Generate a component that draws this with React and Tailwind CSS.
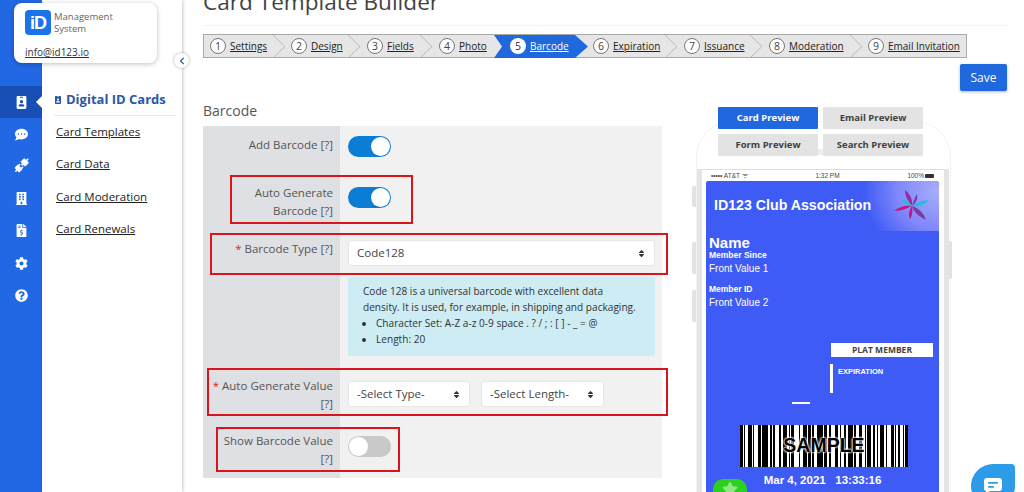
import React from "react";
import { FaIdBadge, FaCommentDots, FaBuilding, FaFileInvoiceDollar, FaCog, FaQuestionCircle, FaChevronLeft, FaSort, FaStar } from "react-icons/fa";

const steps = [
  { n: 1, t: "Settings", w: "w-[82px]", pl: "pl-[6px]" },
  { n: 2, t: "Design", w: "w-[75px]", pl: "pl-[5px]" },
  { n: 3, t: "Fields", w: "w-[72px]", pl: "pl-[6px]" },
  { n: 4, t: "Photo", w: "w-[61px]", pl: "pl-[6px]" },
  { n: 5, t: "Barcode", w: "w-[94px]", pl: "pl-[16px]", active: true },
  { n: 6, t: "Expiration", w: "w-[90px]", pl: "pl-[5px]" },
  { n: 7, t: "Issuance", w: "w-[85px]", pl: "pl-[6px]" },
  { n: 8, t: "Moderation", w: "w-[100px]", pl: "pl-[6px]" },
  { n: 9, t: "Email Invitation", w: "w-[105px]", pl: "pl-[5px]", last: true },
];

function PlugIcon({ className }) {
  return (
    <svg className={className} width="16" height="16" viewBox="0 0 16 16" fill="#fff">
      <g transform="rotate(45 8 8)">
        <rect x="4.6" y="0" width="6.8" height="5.6" rx="1" />
        <rect x="7" y="5.6" width="2" height="1.4" />
        <rect x="5.2" y="7.2" width="1.5" height="2" />
        <rect x="9.3" y="7.2" width="1.5" height="2" />
        <rect x="4.6" y="9" width="6.8" height="5" rx="1" />
        <rect x="7.2" y="14" width="1.6" height="2" />
        <rect x="7.2" y="-2" width="1.6" height="2" />
      </g>
    </svg>
  );
}

const navIcons = [FaIdBadge, FaCommentDots, PlugIcon, FaBuilding, FaFileInvoiceDollar, FaCog, FaQuestionCircle];
const bars = [2,1,1,2,3,1,1,3,2,1,4,2,1,1,2,3,1,2,3,1,1,1,2,4,1,2,3,1,2,1,1,3,4,1,2,2,1,3,3,1,1,2,2,1,4,1,1,3,2,2,1,1,3,1,2,1,1,2,3,1,1,3,2,1,1,1,2,2,1,1,2];

function Step({ s }) {
  return (
    <div className={`relative h-full flex items-center shrink-0 ${s.w} ${s.pl}`}>
      {s.active && (
        <svg className="absolute left-0 top-0" width="94" height="23" viewBox="0 0 94 23">
          <polygon points="0,0 81,0 94,11.5 81,23 0,23 8,11.5" fill="#1f68de" />
        </svg>
      )}
      {!s.active && !s.last && s.n !== 4 && (
        <svg className="absolute right-0 top-0" width="14" height="23" viewBox="0 0 14 23">
          <polyline points="1,0 13,11.5 1,23" fill="none" stroke="#b9b9b9" strokeWidth="1" />
        </svg>
      )}
      <span className={`relative w-[16px] h-[16px] rounded-full flex items-center justify-center text-[10.5px] leading-none shrink-0 ${s.active ? "bg-white text-[#333] " : "bg-white border border-[#777] text-[#444]"}`}>{s.n}</span>
      <a className={`relative ml-[4px] text-[10px] underline whitespace-nowrap ${s.active ? "text-white" : "text-[#222]"}`}>{s.t}</a>
    </div>
  );
}

function Toggle({ on }) {
  return (
    <div className={`w-[43px] h-[21px] rounded-full flex items-center px-[1px] ${on ? "bg-[#0b7dd5] justify-end" : "bg-[#c9c9c9] justify-start"}`}>
      <div className="w-[19px] h-[19px] rounded-full bg-white" />
    </div>
  );
}

function Select({ label, w }) {
  return (
    <div className={`${w} h-[26px] bg-white rounded-[3px] border border-[#e6e6e6] flex items-center justify-between pl-[8px] pr-[8px] text-[11.5px] text-[#444]`}>
      <span>{label}</span>
      <FaSort className="text-[#333] text-[9px]" />
    </div>
  );
}

function Row({ h, pl, pc, children, label, req }) {
  return (
    <div className={`flex ${h}`}>
      <div className={`w-[137px] bg-[#dfe0e4] text-right pr-[7px] text-[11.5px] leading-[18px] text-[#555] ${pl}`}>
        {req && <span className="text-[#e02020]">* </span>}{label}
      </div>
      <div className={`flex-1 bg-[#f1f1f1] pl-[8px] pr-[7px] ${pc}`}>{children}</div>
    </div>
  );
}

function RedBox({ className }) {
  return <div className={`absolute border-2 border-[#d9151b] pointer-events-none ${className}`} />;
}

function Preview({ children, active }) {
  return (
    <div className={`w-[100px] h-[22px] flex items-center justify-center text-[9.5px] font-bold rounded-[1px] ${active ? "bg-[#1f68de] text-white" : "bg-[#e3e3e3] text-[#3f3f3f]"}`}>{children}</div>
  );
}

export default function App() {
  return (
    <div className="relative flex w-[1024px] h-[492px] overflow-hidden bg-white font-['Open_Sans',sans-serif] text-[#333]">
      {/* icon rail */}
      <div className="w-[42px] shrink-0 bg-[#2267e3] pt-[86px] flex flex-col">
        {navIcons.map((I, i) => (
          <div key={i} className={`relative h-[32.2px] flex items-center justify-center text-white shrink-0 ${i === 0 ? "bg-[#174fb5]" : ""}`}>
            <I className="text-[13px]" />
            {i === 0 && <div className="absolute right-0 top-[10px] w-0 h-0 border-y-[6px] border-y-transparent border-r-[6px] border-r-white" />}
          </div>
        ))}
      </div>

      {/* second panel */}
      <div className="w-[140px] shrink-0 bg-white shadow-[1px_0_3px_rgba(0,0,0,0.22)] pt-[91px] pl-[12px] pr-[6px]">
        <div className="flex items-center h-[18px] text-[#2958a8] font-bold text-[13px] whitespace-nowrap">
          <FaIdBadge className="text-[8px] mr-[4px]" />
          <span>Digital ID Cards</span>
        </div>
        <div className="mt-[6px] border-t border-[#e8e8e8]" />
        <div className="flex flex-col pl-[2px] text-[11.5px] text-[#222] underline leading-[32.4px]">
          <a>Card Templates</a>
          <a>Card Data</a>
          <a>Card Moderation</a>
          <a>Card Renewals</a>
        </div>
      </div>

      {/* logo card */}
      <div className="absolute left-[14px] top-[3px] w-[143px] h-[60px] bg-white rounded-[8px] shadow-[0_1px_5px_rgba(0,0,0,0.25)] pl-[11px] pt-[7px]">
        <div className="flex items-start">
          <div className="w-[26px] h-[25px] rounded-[4px] bg-[#1a73e8] text-white flex items-center justify-center font-bold text-[18px] leading-none tracking-[-1px] font-['Liberation_Sans',sans-serif]">iD</div>
          <div className="ml-[3px] text-[9.5px] leading-[12px] text-[#666] pt-[1px]">Management<br />System</div>
        </div>
        <a className="block mt-[10px] text-[10px] leading-[14px] underline text-[#333]">info@id123.io</a>
      </div>

      {/* collapse */}
      <div className="absolute left-[174px] top-[53px] w-[15px] h-[15px] rounded-full bg-white shadow-[0_0_3px_rgba(0,0,0,0.35)] flex items-center justify-center text-[#2958a8]">
        <FaChevronLeft className="text-[8px]" />
      </div>

      {/* main */}
      <div className="flex-1 pl-[21px] pr-[17px] min-w-0">
        <div className="h-[26px] border-b border-[#f3f3f3] relative overflow-hidden">
          <h1 className="absolute left-0 -top-[13px] text-[22.6px] leading-[30px] text-[#444] whitespace-nowrap">Card Template Builder</h1>
        </div>
        <div className="mt-[8px] w-[764px] h-[24px] bg-[#e6e6e6] border-[0.5px] border-[#a9a9a9] flex items-center">
          {steps.map((s) => <Step key={s.n} s={s} />)}
        </div>
        <div className="mt-[6px] flex justify-end">
          <button className="w-[47px] h-[27px] bg-[#1f68de] text-white text-[12px] rounded-[2px] shadow-[0_1px_3px_rgba(0,0,0,0.3)]">Save</button>
        </div>

        <div className="flex mt-[11px]">
          {/* form */}
          <div className="w-[459px] shrink-0">
            <div className="text-[14px] leading-[18px] text-[#555] h-[24px]">Barcode</div>
            <div>
              <Row h="h-[49px]" pl="pt-[10px]" pc="pt-[10px]" label="Add Barcode [?]"><Toggle on /></Row>
              <Row h="h-[58px]" pl="pt-[9px] pl-[20px]" pc="pt-[12px]" label="Auto Generate Barcode [?]"><Toggle on /></Row>
              <Row h="h-[135px]" pl="pt-[7px]" pc="pt-[7px]" label="Barcode Type [?]" req>
                <Select label="Code128" w="w-[307px]" />
                <div className="mt-[11px] h-[79px] w-[307px] bg-[#cdecf4] rounded-[3px] pt-[6px] pl-[15px] text-[10.1px] leading-[16px] text-[#333]">
                  <div>Code 128 is a universal barcode with excellent data</div>
                  <div className="whitespace-nowrap">density. It is used, for example, in shipping and packaging.</div>
                  <ul className="list-disc pl-[13px]">
                    <li>Character Set: A-Z a-z 0-9 space . ? / ; : [ ] - _ = @</li>
                    <li>Length: 20</li>
                  </ul>
                </div>
              </Row>
              <Row h="h-[59px]" pl="pt-[9px] pl-[4px]" pc="pt-[13px] flex gap-[11px]" label="Auto Generate Value [?]" req>
                <Select label="-Select Type-" w="w-[122px]" />
                <Select label="-Select Length-" w="w-[123px]" />
              </Row>
              <Row h="h-[51px]" pl="pt-[5px] pl-[15px]" pc="pt-[9px]" label="Show Barcode Value [?]"><Toggle /></Row>
            </div>
          </div>

          {/* phone */}
          <div className="relative ml-[34px] mt-[19px] w-[255px] h-[500px] shrink-0 border border-[#f2f2f2] rounded-t-[36px] pt-[47px]">
            <div className="absolute -left-[5px] top-[64px] w-[4px] h-[21px] bg-[#e2e2e2] rounded-l-[2px]" />
            <div className="absolute -left-[5px] top-[120px] w-[4px] h-[32px] bg-[#e2e2e2] rounded-l-[2px]" />
            <div className="absolute -left-[5px] top-[168px] w-[4px] h-[32px] bg-[#e2e2e2] rounded-l-[2px]" />
            <div className="absolute -right-[2px] top-[119px] w-[3px] h-[38px] bg-[#e2e2e2] rounded-r-[2px]" />
            <div className="border-x-[5px] border-l-[#e4e4e4] border-r-[#e4e4e4] mr-[1px] ">
              <div className="border-t border-[#ddd] pl-[4px] pr-[5px]">
                <div className="h-[11px] flex items-center justify-between px-[5px] text-[6.5px] text-[#444] font-['Liberation_Sans',sans-serif]">
                  <span>••••• AT&amp;T ᯤ</span>
                  <span>1:32 PM</span>
                  <span className="flex items-center">100%<span className="ml-[1px] inline-block w-[9px] h-[4px] bg-[#333] rounded-[1px]" /></span>
                </div>
                <div className="relative h-[320px] bg-[#3f5bf6] rounded-t-[3px] text-white font-['Liberation_Sans',sans-serif]">
                  <div className="h-[50px] flex items-center justify-between pl-[8px] pr-[8px] rounded-t-[3px] bg-[radial-gradient(ellipse_75px_70px_at_100%_20%,#a9aefc_0%,#8088fb_55%,#3f5bf6_100%)]">
                    <span className="font-bold text-[14.2px] whitespace-nowrap">ID123 Club Association</span>
                    <svg width="38" height="34" viewBox="0 0 38 34">
                      <path d="M19 17 C14 11 12 6 12 1 C17 5 20 11 19 17Z" fill="#9b2a9a" />
                      <path d="M19 17 C21 11 22 8 24 5 C25 10 23 14 19 17Z" fill="#7b3bb0" />
                      <path d="M19 17 C25 13 31 11 36 11 C32 16 25 18 19 17Z" fill="#20c0d8" />
                      <path d="M19 17 C26 19 31 25 33 31 C27 28 21 24 19 17Z" fill="#7d3a98" />
                      <path d="M19 17 C20 23 19 27 17 30 C15 26 16 21 19 17Z" fill="#c3187f" />
                      <path d="M19 17 C13 20 7 22 1 22 C6 18 12 16 19 17Z" fill="#c3187f" />
                      <path d="M19 17 C14 16 10 13 7 10 C12 10 16 13 19 17Z" fill="#20c0d8" />
                    </svg>
                  </div>
                  <div className="pl-[3px]">
                    <div className="pt-[3px] text-[15px] font-bold leading-[17px]">Name</div>
                    <div className="text-[8.5px] font-bold leading-[9px]">Member Since</div>
                    <div className="text-[10px] leading-[14px] mt-[2px]">Front Value 1</div>
                    <div className="text-[8.5px] font-bold leading-[9px] mt-[9px]">Member ID</div>
                    <div className="text-[10px] leading-[14px] mt-[2px]">Front Value 2</div>
                  </div>
                  <div className="ml-[125px] w-[102px] h-[14px] bg-white text-[#444] font-['Open_Sans',sans-serif] font-bold text-[8.5px] flex items-center justify-center mt-[33px]">PLAT MEMBER</div>
                  <div className="ml-[124px] mt-[7px] h-[29px] border-l-[3px] border-white pl-[5px] text-[7.5px] font-bold leading-[10px] pt-[3px]">EXPIRATION</div>
                  <div className="ml-[86px] mt-[9px] w-[18px] h-[2px] bg-white" />
                  <div className="relative ml-[34px] mt-[21px] w-[168px] h-[42px] bg-white overflow-hidden flex">
                    {bars.map((b, i) => (
                      <div key={i} className={`h-full ${i % 2 === 0 ? "bg-black" : "bg-white"}`} style={{ flexGrow: b, flexBasis: 0 }} />
                    ))}
                    <div className="absolute inset-0 flex items-center justify-center text-[19.5px] text-black font-bold [text-shadow:0_0_2px_#fff,0_0_2px_#fff,0_0_3px_#fff]">SAMPLE</div>
                  </div>
                  <div className="mt-[6px] text-center text-[11.5px] font-bold leading-[14px] whitespace-pre">Mar 4, 2021   13:33:16</div>
                  <div className="absolute left-[7px] top-[298px] w-[34px] h-[30px] rounded-[10px] bg-[#2cd11f] flex items-start justify-center pt-[2px]">
                    <FaStar className="text-[#8fe77f] text-[16px]" />
                  </div>
                </div>
              </div>
            </div>
            {/* notch */}
            <div className="absolute left-[95px] top-[27px] w-[34px] h-[6px] rounded-full bg-[#ededed]" />
            {/* tabs */}
            <div className="absolute left-[21px] -top-[15px] grid grid-cols-[100px_100px] gap-x-[5px] gap-y-[5px]">
              <Preview active>Card Preview</Preview>
              <Preview>Email Preview</Preview>
              <Preview>Form Preview</Preview>
              <Preview>Search Preview</Preview>
            </div>
          </div>
        </div>
      </div>

      {/* annotations */}
      <RedBox className="left-[230px] top-[175px] w-[183px] h-[49px]" />
      <RedBox className="left-[210px] top-[233px] w-[458px] h-[42px]" />
      <RedBox className="left-[207px] top-[368px] w-[461px] h-[48px]" />
      <RedBox className="left-[216px] top-[427px] w-[184px] h-[45px]" />

      {/* chat bubble */}
      <div className="absolute left-[971px] top-[464px] w-[44px] h-[44px] bg-[#2c9be8] rounded-[22px] rounded-tr-[4px] flex items-center justify-center">
        <svg width="20" height="20" viewBox="0 0 20 20">
          <path d="M4 2h12a3 3 0 0 1 3 3v7a3 3 0 0 1-3 3H7l-4 3v-3a2.5 2.5 0 0 1-2-3V5a3 3 0 0 1 3-3z" fill="#fff" />
          <rect x="5" y="6" width="10" height="1.8" rx="0.9" fill="#2c9be8" />
          <rect x="5" y="10" width="6" height="1.8" rx="0.9" fill="#2c9be8" />
        </svg>
      </div>
    </div>
  );
}
